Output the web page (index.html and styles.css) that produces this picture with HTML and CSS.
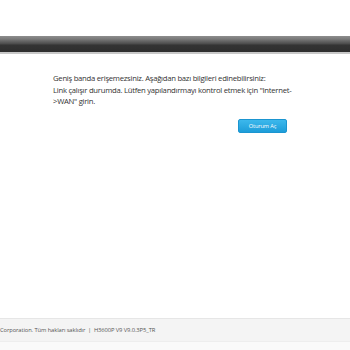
FILE: index.html
```html
<!DOCTYPE html>
<html>
<head>
	<meta charset="utf-8">
	<title>Durum</title>
	<link rel="stylesheet" href="styles.css">
</head>
<body>
	<div class="sayfa">
		<div class="ust"></div>
		<div class="menu"></div>
		<div class="icerik">
			<p class="mesaj">Geniş banda erişemezsiniz. Aşağıdan bazı bilgileri edinebilirsiniz:<br>
			Link çalışır durumda. Lütfen yapılandırmayı kontrol etmek için "Internet-<wbr>&gt;WAN" girin.</p>
			<div class="butonlar">
				<button class="oturum">Oturum Aç</button>
			</div>
		</div>
		<div class="alt">Corporation. Tüm hakları saklıdır&nbsp;&nbsp;|&nbsp;&nbsp;H3600P V9 V9.0.3P5_TR</div>
		<div class="alt2"></div>
	</div>
</body>
</html>
```

FILE: styles.css
```css
body {
	margin: 0;
	background-color: #ffffff;
	font-family: "Open Sans", "DejaVu Sans", sans-serif;
}

.sayfa {
	display: flex;
	flex-direction: column;
	height: 350px;
}

.ust {
	height: 36px;
}

.menu {
	height: 16px;
	background: linear-gradient(#8e8e8e 0, #7a7a7a 3px, #4a4a4a 8px, #343434 9px, #2f2f2f 15px);
	border-bottom: 2px solid #c8c8c8;
}

.icerik {
	flex: 1;
	padding: 19px 55px 0 53px;
}

.mesaj {
	margin: 0;
	font-size: 7.7px;
	line-height: 11.5px;
	letter-spacing: -0.26px;
	color: #333333;
}

.butonlar {
	display: flex;
	justify-content: flex-end;
	padding-top: 11px;
	padding-right: 8px;
}

.oturum {
	width: 49px;
	height: 14px;
	padding: 0;
	border: 1px solid #1b95d0;
	border-radius: 2px;
	background: linear-gradient(#3cb8ec, #1d9dd9);
	color: #ffffff;
	font-family: "Open Sans", sans-serif;
	font-size: 5.6px;
	letter-spacing: -0.1px;
}

.alt {
	height: 22px;
	line-height: 22px;
	background-color: #f4f4f4;
	border-top: 1px solid #e6e6e6;
	font-size: 5.8px;
	letter-spacing: -0.1px;
	color: #555555;
	white-space: nowrap;
}

.alt2 {
	height: 8px;
	background-color: #fafafa;
	border-top: 1px solid #eeeeee;
}
```
